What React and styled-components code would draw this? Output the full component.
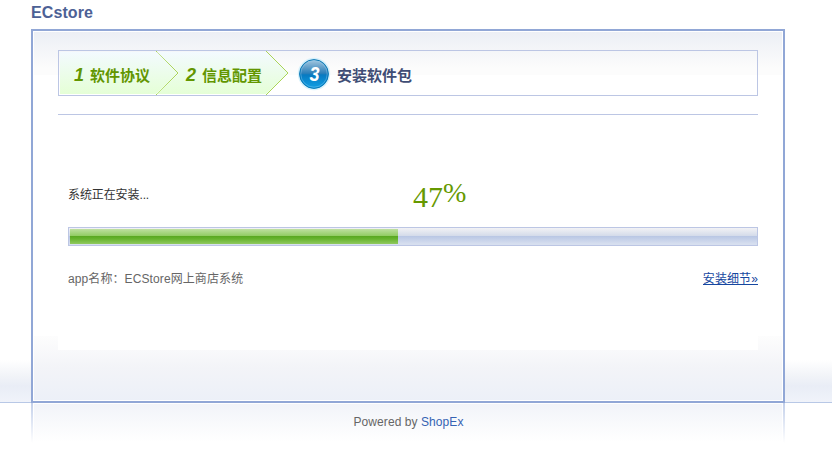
import React from "react";
import styled, { createGlobalStyle } from "styled-components";

const Global = createGlobalStyle`
  * { box-sizing: border-box; }
  body {
    margin: 0;
    background: #fff;
    font-family: "Liberation Sans", "Noto Sans CJK SC", sans-serif;
    font-size: 12px;
    overflow: hidden;
  }
`;

const Page = styled.div`
  width: 832px;
  height: 453px;
  overflow: hidden;
  white-space: nowrap;
`;

const Title = styled.h1`
  margin: 0;
  height: 29px;
  padding: 3px 0 0 31px;
  font-size: 16px;
  line-height: 19px;
  font-weight: bold;
  letter-spacing: 0.1px;
  color: #4d6195;
`;

const Stage = styled.div`
  height: 374px;
  padding: 0 47px 0 31px;
  background:
    linear-gradient(#b8c8e6, #b8c8e6) 0 100% / 100% 1px no-repeat,
    linear-gradient(#ffffff, #f2f4f8 36%, #e9edf6 62%, #f0f3fa) 0 331px / 100% 42px no-repeat;
`;

const Panel = styled.main`
  height: 374px;
  border: 2px solid #91a7d6;
  padding: 1px;
  background: #fff;
`;

const PanelInner = styled.div`
  height: 368px;
  padding: 18px 24px 0;
  background:
    linear-gradient(#eceff5, #fcfcfc 85%) 0 0 / 100% 43px no-repeat,
    linear-gradient(#fdfdfd, #f3f4f8 48%, #ecf0f8) 0 304px / 100% 65px no-repeat;
`;

const Steps = styled.ol`
  display: flex;
  height: 46px;
  margin: 0;
  padding: 0;
  list-style: none;
  border: 1px solid #bcc6e4;
`;

const Step = styled.li`
  display: flex;
  position: relative;
  width: ${(p) => p.$width}px;
  height: 44px;
  color: ${(p) => (p.$done ? "#629600" : "#404d75")};
  font-weight: bold;
`;

const StepShape = styled.svg`
  position: absolute;
  top: 0;
  left: 0;
  overflow: visible;
`;

const StepNumber = styled.span`
  position: relative;
  width: 16px;
  margin-left: ${(p) => p.$indent}px;
  font-size: 18px;
  line-height: 20px;
  padding-top: 14px;
  font-style: italic;
`;

const StepLabel = styled.span`
  position: relative;
  padding-top: 15px;
  font-size: 15px;
  line-height: 20px;
`;

const Badge = styled.svg`
  margin: 6px 6px 0 18px;
  flex: none;
`;

const Content = styled.section`
  height: 236px;
  margin-top: 18px;
  padding-left: 10px;
  border-top: 1px solid #bcc6e4;
  background: #fff;
`;

const Status = styled.div`
  display: flex;
  height: 112px;
  color: #333;
`;

const StatusText = styled.div`
  width: 345px;
  padding-top: 72px;
  line-height: 16px;
  letter-spacing: -0.1px;
`;

const Percent = styled.div`
  display: flex;
  padding-top: 63px;
  font-family: "Liberation Serif", serif;
  font-size: 30px;
  line-height: 30px;
  color: #669900;
`;

const Digits = styled.span`
  padding-top: 4px;
`;

const Sign = styled.span`
  font-size: 28px;
  line-height: 30px;
`;

const Track = styled.div`
  height: 19px;
  padding: 1px;
  border: 1px solid #bcc6e4;
  background: linear-gradient(#f2f2f5, #d4dbea 46%, #b8c6e4 47%, #d7dfef 94%);
`;

const Fill = styled.div`
  width: 328px;
  height: 15px;
  background: linear-gradient(#bfe0a1, #91cc63 46%, #58a720 47%, #66b32e 65%, #90c95f);
`;

const Details = styled.div`
  display: flex;
  justify-content: space-between;
  padding-top: 25px;
  line-height: 16px;
  color: #666;
`;

const AppName = styled.span`
  letter-spacing: 0.1px;
`;

const DetailLink = styled.a`
  height: 14px;
  line-height: 16px;
  border-bottom: 1px solid #1647a0;
  letter-spacing: 0.1px;
  color: #1647a0;
`;

const Footer = styled.footer`
  width: 754px;
  height: 41px;
  margin-left: 31px;
  padding: 11px 0 0 1px;
  text-align: center;
  line-height: 16px;
  letter-spacing: 0.07px;
  color: #666;
  background:
    linear-gradient(#c3d0ea, #fff) 0 0 / 2px 40px no-repeat,
    linear-gradient(#c3d0ea, #fff) 100% 0 / 2px 40px no-repeat,
    linear-gradient(#f2f4f9, #fff) 3px 1px / 748px 38px no-repeat;
`;

const Brand = styled.a`
  color: #3563b3;
`;

function DoneStep({ number, label, width, numberIndent, overlap }) {
  const edge = width - 13;
  const tip = width + 9;
  return (
    <Step $done $width={width}>
      <StepShape width={width + 14} height="44" viewBox={`0 0 ${width + 14} 44`}>
        <defs>
          <linearGradient id={`step${number}`} x1="0" y1="0" x2="0" y2="1">
            <stop offset="0" stopColor="#f3faff" />
            <stop offset="1" stopColor="#e5ffd6" />
          </linearGradient>
        </defs>
        <path
          d={overlap
            ? `M-12 1H${edge}L${tip} 22L${edge} 43H-12L10 22Z`
            : `M1 1H${edge}L${tip} 22L${edge} 43H1Z`}
          fill={`url(#step${number})`}
        />
        <path d={`M${edge} 0L${tip} 22L${edge} 44`} fill="none" stroke="#aad458" />
      </StepShape>
      <StepNumber $indent={numberIndent}>{number}</StepNumber>
      <StepLabel>{label}</StepLabel>
    </Step>
  );
}

export default function App() {
  return (
    <>
      <Global />
      <Page>
        <Title>ECstore</Title>
        <Stage>
          <Panel>
            <PanelInner>
              <Steps>
                <DoneStep number="1" label="软件协议" width={110} numberIndent={15} />
                <DoneStep number="2" label="信息配置" width={110} numberIndent={17} overlap />
                <Step $width={200}>
                  <Badge width="34" height="34" viewBox="0 0 34 34">
                    <defs>
                      <linearGradient id="badge" x1="0" y1="0" x2="0" y2="1">
                        <stop offset="0" stopColor="#a7c8df" />
                        <stop offset="0.48" stopColor="#297eb9" />
                        <stop offset="0.53" stopColor="#077ac1" />
                        <stop offset="1" stopColor="#10a0e5" />
                      </linearGradient>
                    </defs>
                    <circle cx="17" cy="17" r="16.2" fill="#c7edfb" opacity="0.7" />
                    <circle cx="17" cy="17" r="14.4" fill="url(#badge)" stroke="#0879b7" strokeWidth="1" />
                    <circle cx="17" cy="17" r="13.2" fill="none" stroke="#8dcbed" strokeWidth="0.7" opacity="0.6" />
                    <text x="17.5" y="23.5" textAnchor="middle" textLength="10" lengthAdjust="spacingAndGlyphs" fontFamily="Liberation Sans" fontSize="20" fontWeight="bold" fontStyle="italic" fill="#fff">3</text>
                  </Badge>
                  <StepLabel>安装软件包</StepLabel>
                </Step>
              </Steps>
              <Content>
                <Status>
                  <StatusText>系统正在安装...</StatusText>
                  <Percent>
                    <Digits>47</Digits>
                    <Sign>%</Sign>
                  </Percent>
                </Status>
                <Track>
                  <Fill />
                </Track>
                <Details>
                  <AppName>app名称：ECStore网上商店系统</AppName>
                  <DetailLink>安装细节»</DetailLink>
                </Details>
              </Content>
            </PanelInner>
          </Panel>
        </Stage>
        <Footer>
          Powered by <Brand>ShopEx</Brand>
        </Footer>
      </Page>
    </>
  );
}
